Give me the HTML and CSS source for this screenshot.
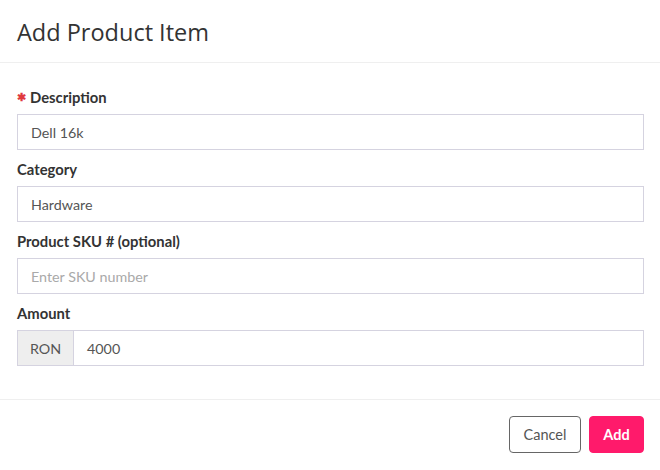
FILE: index.html
```html
<!DOCTYPE html>
<html>
<head>
<meta charset="utf-8">
<link rel="stylesheet" href="styles.css">
</head>
<body>
<div class="modal">
  <div class="modal-header">
    <h1 class="modal-title">Add Product Item</h1>
  </div>
  <div class="modal-body">
    <div class="field">
      <label class="label"><span class="req">✱</span>Description</label>
      <div class="input">Dell 16k</div>
    </div>
    <div class="field">
      <label class="label">Category</label>
      <div class="input">Hardware</div>
    </div>
    <div class="field">
      <label class="label">Product SKU # (optional)</label>
      <div class="input placeholder">Enter SKU number</div>
    </div>
    <div class="field">
      <label class="label">Amount</label>
      <div class="input-group">
        <span class="addon">RON</span>
        <div class="input grouped">4000</div>
      </div>
    </div>
  </div>
  <div class="modal-footer">
    <button class="btn btn-cancel">Cancel</button>
    <button class="btn btn-add">Add</button>
  </div>
</div>
</body>
</html>
```
FILE: styles.css
```css
* { box-sizing: border-box; }
html, body { margin: 0; padding: 0; background: #fff; }
body { font-family: "Lato", "Liberation Sans", sans-serif; color: #333; }
.modal { width: 660px; height: 470px; }
.modal-header {
  height: 63px;
  border-bottom: 1px solid #efefef;
  padding: 16px 16px 0 17px;
}
.modal-title {
  margin: 0;
  font-family: "Open Sans", sans-serif;
  font-weight: 400;
  font-size: 23.5px;
  line-height: 32px;
  color: #333;
}
.modal-body {
  padding: 24px 16px 33px 17px;
  display: flex;
  flex-direction: column;
  gap: 9px;
}
.field { display: flex; flex-direction: column; gap: 7px; }
.label {
  font-size: 14.8px;
  font-weight: 700;
  line-height: 20px;
  height: 20px;
  color: #333;
  display: flex;
  align-items: center;
}
.req { color: #e0393e; font-size: 11px; margin-right: 4px; }
.input {
  height: 36px;
  border: 1px solid #d5d3e0;
  padding: 0 13px;
  font-size: 14.3px;
  color: #555;
  display: flex;
  align-items: center;
  background: #fff;
}
.input.placeholder { color: #a9a9a9; }
.input-group { display: flex; height: 36px; }
.addon {
  width: 57px;
  border: 1px solid #d5d3e0;
  background: #eeeeee;
  color: #555;
  font-size: 14.3px;
  display: flex;
  align-items: center;
  justify-content: center;
}
.input.grouped { flex: 1; border-left: none; }
.modal-footer {
  border-top: 1px solid #efefef;
  padding: 16px 16px 0 17px;
  display: flex;
  justify-content: flex-end;
  gap: 8px;
}
.btn {
  height: 37px;
  border-radius: 4px;
  font-family: "Lato", "Liberation Sans", sans-serif;
  font-size: 14.5px;
  padding: 0;
  cursor: pointer;
}
.btn-cancel {
  width: 72px;
  background: #fff;
  border: 1px solid #666;
  color: #555;
}
.btn-add {
  width: 55px;
  background: #ff1a6b;
  border: 1px solid #ff1a6b;
  color: #fff;
  font-weight: 700;
}
```
